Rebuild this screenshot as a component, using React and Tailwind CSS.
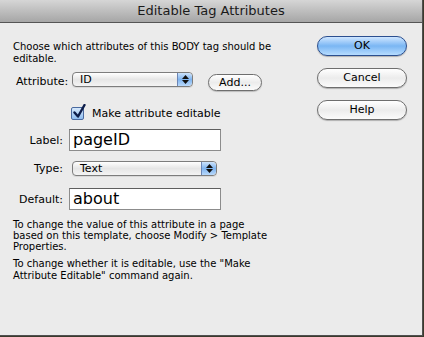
import React from 'react';

const font = "font-['DejaVu_Sans',sans-serif]";

function Stepper() {
  return (
    <span className="flex h-full w-[15px] flex-col items-center justify-center gap-[1px] rounded-r-[4px] border-l border-[#6b85b5] bg-gradient-to-b from-[#cde3fb] via-[#7fb4ef] to-[#b9d9fb]">
      <svg width="7" height="4" viewBox="0 0 7 4"><path d="M3.5 0 L7 4 L0 4 Z" fill="#111" /></svg>
      <svg width="7" height="4" viewBox="0 0 7 4"><path d="M0 0 L7 0 L3.5 4 Z" fill="#111" /></svg>
    </span>
  );
}

function Select({ value, width }) {
  return (
    <div className={`flex h-[15px] ${width} items-center rounded-[4px] border border-[#7d7d7d] bg-gradient-to-b from-[#ffffff] via-[#e6e6e6] to-[#f4f4f4] shadow-[0_1px_0_rgba(0,0,0,0.08)]`}>
      <span className="flex-1 pl-[7px] text-[11px] leading-[13px] text-black">{value}</span>
      <Stepper />
    </div>
  );
}

function Aqua({ children, blue }) {
  return (
    <button
      className={`h-[20px] w-[90px] rounded-full border text-[11px] leading-[18px] text-black ${
        blue
          ? 'border-[#2b4f8f] bg-gradient-to-b from-[#cfe6ff] via-[#7ab6f3] to-[#b6dcff]'
          : 'border-[#6e6e6e] bg-gradient-to-b from-[#ffffff] via-[#ececec] to-[#fbfbfb]'
      } shadow-[0_1px_1px_rgba(0,0,0,0.25)]`}
    >
      {children}
    </button>
  );
}

function Label({ children }) {
  return <span className="w-[50px] text-right text-[11px] leading-[13px] text-black">{children}</span>;
}

export default function App() {
  return (
    <div className={`h-[337px] w-[424px] bg-[#3b3a2c] ${font}`}>
      <div className="h-[336px] w-[423px] border-b border-r border-[#505050] bg-[#ebebeb]">
        <div className="flex h-[23px] items-center justify-center border-b border-[#555] bg-gradient-to-b from-[#d6d6d6] to-[#a6a6a6] text-[13px] text-[#1a1a1a]">
          Editable Tag Attributes
        </div>

        <div className="flex">
          <div className="flex-1 pl-[13px] pt-[18px] text-[10px] text-black">
            <p className="w-[270px] leading-[12px]">Choose which attributes of this BODY tag should be editable.</p>

            <div className="mt-[7px] flex items-start">
              <span className="mt-[3px] w-[51px] pl-[3px] text-[11px] leading-[13px]">Attribute:</span>
              <div className="ml-[8px]">
                <Select value="ID" width="w-[121px]" />
              </div>
              <button className="ml-[15px] mt-[2px] h-[17px] w-[54px] rounded-full border border-[#6e6e6e] bg-gradient-to-b from-[#ffffff] via-[#ececec] to-[#fbfbfb] text-[11px] leading-[15px] shadow-[0_1px_1px_rgba(0,0,0,0.2)]">
                Add...
              </button>
            </div>

            <div className="mt-[16px] flex items-center pl-[58px]">
              <span className="relative h-[13px] w-[13px] rounded-[2px] border border-[#4a6aa0] bg-gradient-to-b from-[#d6e8fb] to-[#8fbdf0]">
                <svg className="absolute -top-[4px] left-[1px]" width="13" height="15" viewBox="0 0 13 15">
                  <path d="M1.5 8.5 L5 12.5 L11.5 1" fill="none" stroke="#0d1d4a" strokeWidth="2.4" strokeLinecap="round" strokeLinejoin="round" />
                </svg>
              </span>
              <span className="ml-[8px] text-[11px] leading-[13px]">Make attribute editable</span>
            </div>

            <div className="mt-[9px] flex items-center">
              <Label>Label:</Label>
              <div className="ml-[6px] flex h-[22px] w-[152px] items-center border border-[#8c8c8c] border-t-[#5e5e5e] bg-white pl-[3px] text-[16px]">pageID</div>
            </div>

            <div className="mt-[10px] flex items-center">
              <Label>Type:</Label>
              <div className="ml-[9px]">
                <Select value="Text" width="w-[145px]" />
              </div>
            </div>

            <div className="mt-[12px] flex items-center">
              <Label>Default:</Label>
              <div className="ml-[6px] flex h-[22px] w-[152px] items-center border border-[#8c8c8c] border-t-[#5e5e5e] bg-white pl-[3px] text-[16px]">about</div>
            </div>

            <p className="mt-[9px] w-[258px] leading-[11px]">
              To change the value of this attribute in a page based on this template, choose Modify &gt; Template Properties.
            </p>
            <p className="mt-[6px] w-[265px] leading-[12px]">
              To change whether it is editable, use the "Make Attribute Editable" command again.
            </p>
          </div>

          <div className="mr-[15px] flex w-[90px] flex-col gap-[12px] pt-[13px]">
            <Aqua blue>OK</Aqua>
            <Aqua>Cancel</Aqua>
            <Aqua>Help</Aqua>
          </div>
        </div>
      </div>
    </div>
  );
}
